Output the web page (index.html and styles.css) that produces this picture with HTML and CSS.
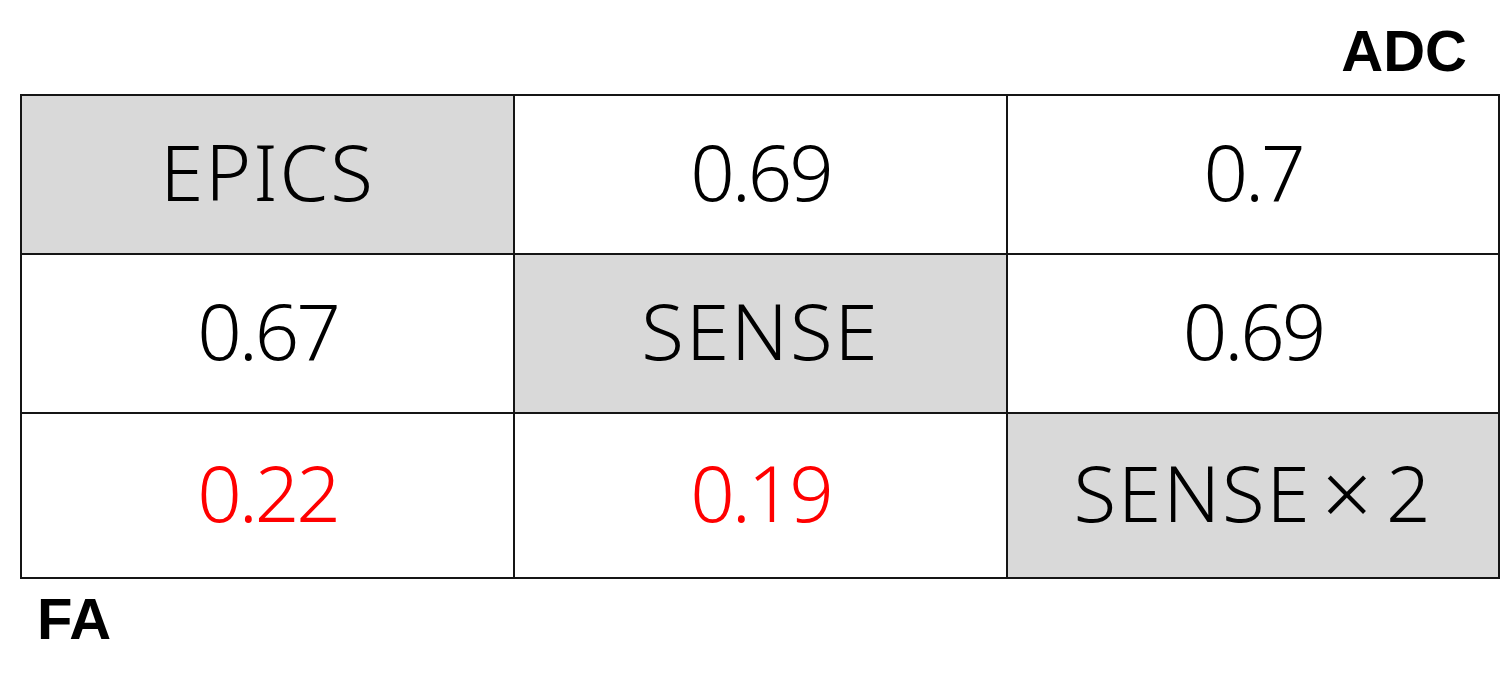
FILE: index.html
```html
<!DOCTYPE html>
<html>
<head>
<meta charset="utf-8">
<link rel="stylesheet" href="styles.css">
</head>
<body>
<div class="page">
  <div class="axis axis-top">ADC</div>
  <div class="matrix">
    <div class="cell diag">EPICS</div>
    <div class="cell num">0.69</div>
    <div class="cell num">0.7</div>
    <div class="cell num">0.67</div>
    <div class="cell diag">SENSE</div>
    <div class="cell num">0.69</div>
    <div class="cell num low">0.22</div>
    <div class="cell num low">0.19</div>
    <div class="cell diag">SENSE<span class="times">×</span>2</div>
  </div>
  <div class="axis axis-bottom">FA</div>
</div>
</body>
</html>
```
FILE: styles.css
```css
html, body {
  margin: 0;
  padding: 0;
  background: #ffffff;
}
.page {
  width: 1504px;
  height: 693px;
}
.axis {
  font-family: "Liberation Sans", Arial, sans-serif;
  font-weight: 700;
  font-size: 58px;
  color: #000;
}
.axis-top {
  text-align: right;
  padding: 7px 37px 0 0;
  line-height: 87px;
}
.axis-bottom {
  padding-left: 37px;
  line-height: 80px;
}
.matrix {
  margin-left: 20px;
  width: 1476px;
  display: grid;
  grid-template-columns: 491px 491px 490px;
  grid-template-rows: 157px 157px 163px;
  gap: 2px;
  border: 2px solid #151515;
  background: #151515;
}
.cell {
  background: #ffffff;
  display: flex;
  align-items: center;
  justify-content: center;
  padding-bottom: 8px;
  font-family: "Noto Sans", "Noto Sans CJK JP", sans-serif;
  font-weight: 300;
  font-size: 78px;
  letter-spacing: 2px;
  color: #000;
}
.cell.num {
  letter-spacing: -3px;
}
.cell.diag {
  background: #d9d9d9;
}
.cell.low {
  color: #ff0000;
}
.times {
  font-size: 88px;
  line-height: 1;
  margin: 0 12px 0 10px;
}
```
